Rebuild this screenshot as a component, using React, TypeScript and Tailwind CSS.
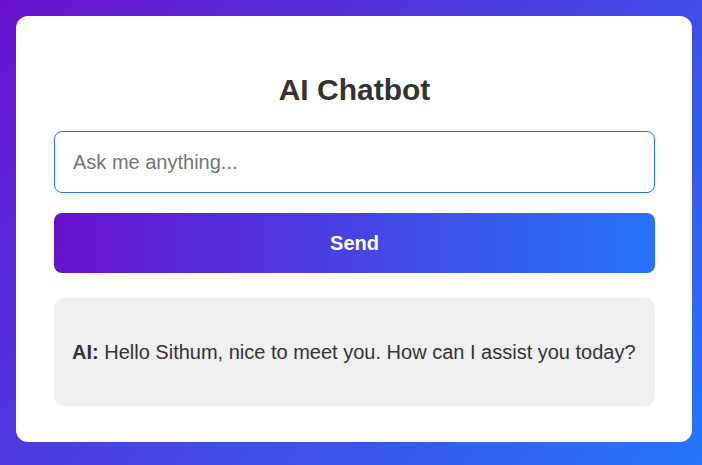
export default function App() {
  return (
    <div
      className="h-[465px] w-full bg-[linear-gradient(135deg,#6a11cb,#2575fc)] p-4"
      style={{ fontFamily: '"Liberation Sans", Arial, sans-serif' }}
    >
      <div className="flex h-[426px] w-[676px] flex-col rounded-xl bg-white pl-[38px] pr-[37px] pt-[56px] text-[#333]">
        <h1 className="mb-[24px] text-center text-[30px] font-bold leading-[35px]">AI Chatbot</h1>
        <input
          type="text"
          autoFocus
          placeholder="Ask me anything..."
          className="h-[62px] w-full rounded-lg border border-[#2575fc] px-[18px] text-[20px] text-[#333] caret-black placeholder:text-[#757575] focus:outline-none"
        />
        <button
          type="button"
          className="mt-[20px] h-[60px] w-full rounded-lg bg-[linear-gradient(to_right,#6a11cb,#2575fc)] text-[20px] font-bold text-white"
        >
          Send
        </button>
        <div className="mt-[25px] flex h-[108px] items-center rounded-[10px] bg-[#f0f0f0] px-[18px] text-[20px]">
          <p>
            <strong>AI:</strong> Hello Sithum, nice to meet you. How can I assist you today?
          </p>
        </div>
      </div>
    </div>
  );
}
